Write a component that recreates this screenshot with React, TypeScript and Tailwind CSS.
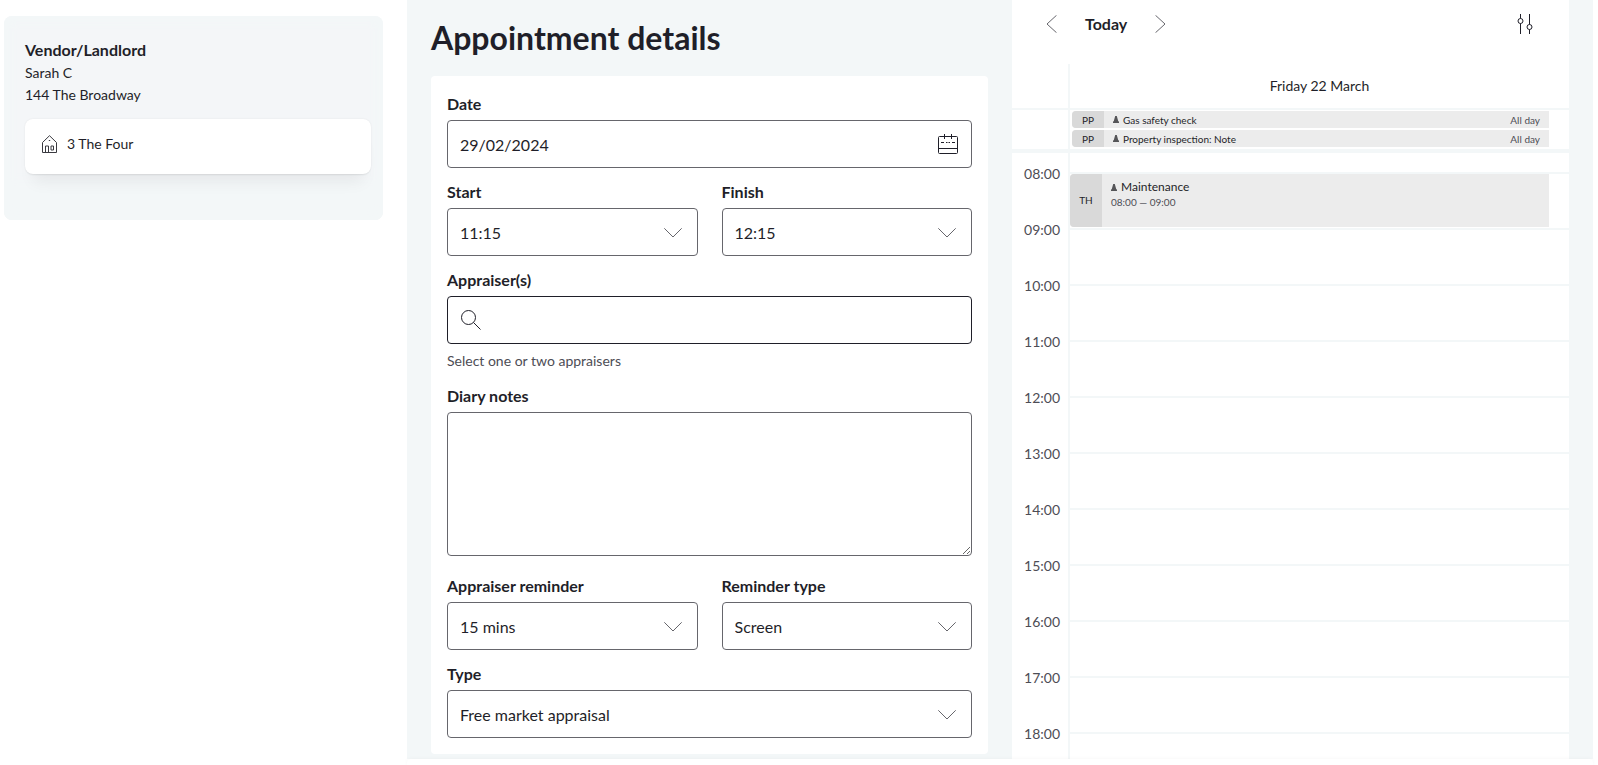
import React from 'react';

const hours = ['08:00', '09:00', '10:00', '11:00', '12:00', '13:00', '14:00', '15:00', '16:00', '17:00', '18:00'];

const allDayEvents = [
  { initials: 'PP', title: 'Gas safety check' },
  { initials: 'PP', title: 'Property inspection: Note' },
];

const HouseIcon = () => (
  <svg width="15" height="18" viewBox="0 0 15 18" fill="none" stroke="#3a3a40" aria-hidden="true">
    <path d="M.5 17.500V7.500L7.500 .7l7 6.800v10z" />
    <path d="M3.500 17.500v-6.500h3v6.500M9 11h2.500v4H9z" />
    <path d="M6.800 5.500h1.400" />
  </svg>
);

const CalendarIcon = () => (
  <svg width="20" height="20" viewBox="0 0 20 20" fill="none" stroke="#1f1f29" aria-hidden="true">
    <rect x=".5" y="2.500" width="19" height="17" rx="1" />
    <path d="M6.500 0v5M13.500 0v5M.5 14.500h19M3 8.500h3M8 8.500h1M9.500 8.500h1M11 8.500h1M14 8.500h3" />
  </svg>
);

const SearchIcon = () => (
  <svg width="20" height="20" viewBox="0 0 20 20" fill="none" stroke="#1f1f29" aria-hidden="true">
    <circle cx="7.500" cy="7.500" r="7" />
    <path d="M12.500 12.500l7 7" />
  </svg>
);

const SlidersIcon = () => (
  <svg width="16" height="20" viewBox="0 0 16 20" fill="none" stroke="#1f1f29" aria-hidden="true">
    <path d="M3.500 0v4.500M3.500 9.500V20M12.500 0v10.500M12.500 15.500V20" />
    <circle cx="3.500" cy="7" r="2.500" />
    <circle cx="12.500" cy="13" r="2.500" />
  </svg>
);

const BellIcon = ({ className }: { className?: string }) => (
  <svg width="6" height="7" viewBox="0 0 6 7" fill="#555558" className={className} aria-hidden="true">
    <path d="M2.200 0h1.600l1.400 5 .8 .8V7H0V5.800L.8 5z" />
  </svg>
);

const labelClass = 'block text-base font-bold leading-6 mb-1';
const fieldClass = 'block w-full rounded border border-[#66666c] bg-white text-base text-[#1f1f29] outline-none';

interface SelectFieldProps {
  id: string;
  label: string;
  value: string;
}

const SelectField: React.FC<SelectFieldProps> = ({ id, label, value }) => (
  <div>
    <label htmlFor={id} className={labelClass}>{label}</label>
    <div className="relative">
      <select id={id} defaultValue={value} className={`${fieldClass} h-12 appearance-none pl-3 pr-12 pt-0.5`}>
        <option>{value}</option>
      </select>
      <svg
        width="18"
        height="10"
        viewBox="0 0 18 10"
        fill="none"
        stroke="#66666c"
        className="pointer-events-none absolute right-4 top-5"
        aria-hidden="true"
      >
        <path d="M.3 .3L9 9 17.700 .3" />
      </svg>
    </div>
  </div>
);

const VendorCard = () => (
  <div className="ml-1 mr-6 mt-4 rounded-lg bg-[#f4f6f8] pb-[46px] pl-[21px] pr-3 pt-[22px] shadow-[inset_0_0_6px_8px_#f3f7f8,inset_0_-40px_10px_#f3f7f8]">
    <h2 className="text-base font-bold leading-6">Vendor/Landlord</h2>
    <p className="text-sm leading-[22px]">Sarah C</p>
    <p className="text-sm leading-[22px]">144 The Broadway</p>
    <a
      href="#property"
      className="mt-[13px] flex h-[55px] items-center gap-2.5 rounded-lg bg-white px-[17px] pb-1.5 text-sm shadow-[0_0_2px_rgba(0,0,0,0.08),0_2px_2px_-1px_rgba(0,0,0,0.06),0_16px_16px_-8px_rgba(0,0,0,0.06)]"
    >
      <HouseIcon />
      3 The Four
    </a>
  </div>
);

const AppointmentForm = () => (
  <div>
    <h1 className="mb-4 mt-4 text-[32px] font-bold leading-[44px]">Appointment details</h1>
    <form className="flex flex-col gap-3 rounded bg-white p-4">
      <div>
        <label htmlFor="date" className={labelClass}>Date</label>
        <div className="relative">
          <input id="date" type="text" defaultValue="29/02/2024" className={`${fieldClass} h-12 pl-3 pr-12`} />
          <button type="button" aria-label="Choose date" className="absolute right-3.5 top-3.5">
            <CalendarIcon />
          </button>
        </div>
      </div>

      <div className="grid grid-cols-2 gap-6">
        <SelectField id="start" label="Start" value="11:15" />
        <SelectField id="finish" label="Finish" value="12:15" />
      </div>

      <div>
        <label htmlFor="appraisers" className={labelClass}>Appraiser(s)</label>
        <div className="relative">
          <input
            id="appraisers"
            type="text"
            className="block h-12 w-full rounded border border-[#1f1f29] bg-white pl-12 pr-3 text-base outline-none"
          />
          <span className="pointer-events-none absolute left-3.5 top-3.5">
            <SearchIcon />
          </span>
        </div>
        <p className="mt-1.5 text-sm leading-[22px] text-[#4d4d55]">Select one or two appraisers</p>
      </div>

      <div className="mb-1.5">
        <label htmlFor="notes" className={labelClass}>Diary notes</label>
        <textarea id="notes" className={`${fieldClass} h-36 resize-y p-3`} />
      </div>

      <div className="grid grid-cols-2 gap-6">
        <SelectField id="reminder" label="Appraiser reminder" value="15 mins" />
        <SelectField id="reminder-type" label="Reminder type" value="Screen" />
      </div>

      <SelectField id="type" label="Type" value="Free market appraisal" />
    </form>
  </div>
);

const DiaryCalendar = () => (
  <div className="flex flex-col overflow-hidden bg-white">
    <div className="flex h-16 shrink-0 items-start justify-between pl-[34px] pr-9 pt-3">
      <div className="flex h-6 items-center">
        <button type="button" aria-label="Previous day">
          <svg width="11" height="18" viewBox="0 0 11 18" fill="none" stroke="#66666c" aria-hidden="true">
            <path d="M10.500 .3L1 9l9.500 8.700" />
          </svg>
        </button>
        <button type="button" className="mx-7 text-base font-bold leading-6">Today</button>
        <button type="button" aria-label="Next day">
          <svg width="11" height="18" viewBox="0 0 11 18" fill="none" stroke="#66666c" aria-hidden="true">
            <path d="M.5 .3L10 9 .5 17.700" />
          </svg>
        </button>
      </div>
      <button type="button" aria-label="Filters" className="flex h-6 items-center">
        <SlidersIcon />
      </button>
    </div>

    <div className="flex shrink-0 border-b-2 border-[#f3f7f8]">
      <div className="w-14" />
      <div className="flex-1 border-l-2 border-[#f3f7f8] py-3 text-center text-sm leading-5">Friday 22 March</div>
    </div>

    {/* All day events */}
    <div className="flex shrink-0 border-b-4 border-[#f3f7f8]">
      <div className="w-14" />
      <ul className="flex flex-1 flex-col gap-0.5 border-l-2 border-[#f3f7f8] pb-0.5 pl-0.5 pr-5 pt-px text-[10px]">
        {allDayEvents.map((event) => (
          <li key={event.title} className="flex h-[17px] items-center overflow-hidden rounded-l-sm bg-[#ececec] leading-[18px]">
            <span className="w-8 bg-[#d9d9d9] text-center">{event.initials}</span>
            <BellIcon className="ml-[9px] mr-1" />
            <span className="flex-1">{event.title}</span>
            <span className="pr-[9px] text-[#4d4d55]">All day</span>
          </li>
        ))}
      </ul>
    </div>

    <div className="flex min-h-0 flex-1 overflow-hidden">
      <div className="w-14 pr-2 pt-[9px] text-right text-sm text-[#4d4d55]">
        {hours.map((hour) => (
          <div key={hour} className="h-14 leading-6">{hour}</div>
        ))}
      </div>
      <div className="flex-1 border-l-2 border-[#f3f7f8] pt-[19px]">
        {hours.map((hour) => (
          <div key={hour} className="h-14 border-t-2 border-[#f3f7f8]">
            {hour === '08:00' && (
              <div className="mr-5 flex h-[53px] overflow-hidden rounded-l-sm bg-[#ececec]">
                <div className="flex w-8 items-center justify-center bg-[#d9d9d9] text-[10px]">TH</div>
                <div className="pl-[9px] pt-1.5">
                  <div className="flex items-center gap-1 text-xs leading-[14px]">
                    <BellIcon />
                    Maintenance
                  </div>
                  <div className="text-[10px] leading-4 text-[#4d4d55]">08:00 — 09:00</div>
                </div>
              </div>
            )}
          </div>
        ))}
      </div>
    </div>
  </div>
);

const App: React.FC = () => {
  return (
    <div className="grid h-screen grid-cols-[407px_1fr] overflow-hidden bg-white font-['Lato',sans-serif] text-[#1f1f29]">
      <aside>
        <VendorCard />
      </aside>
      <main className="mr-[5px] flex min-h-0 flex-col">
        <div className="grid min-h-0 flex-1 grid-cols-2 gap-6 overflow-hidden bg-[#f3f7f8] px-6">
          <AppointmentForm />
          <DiaryCalendar />
        </div>
        <footer className="h-1.5 shrink-0 rounded-t bg-white shadow-[0_0_4px_rgba(0,0,0,0.04)]" />
      </main>
    </div>
  );
};

export default App;
